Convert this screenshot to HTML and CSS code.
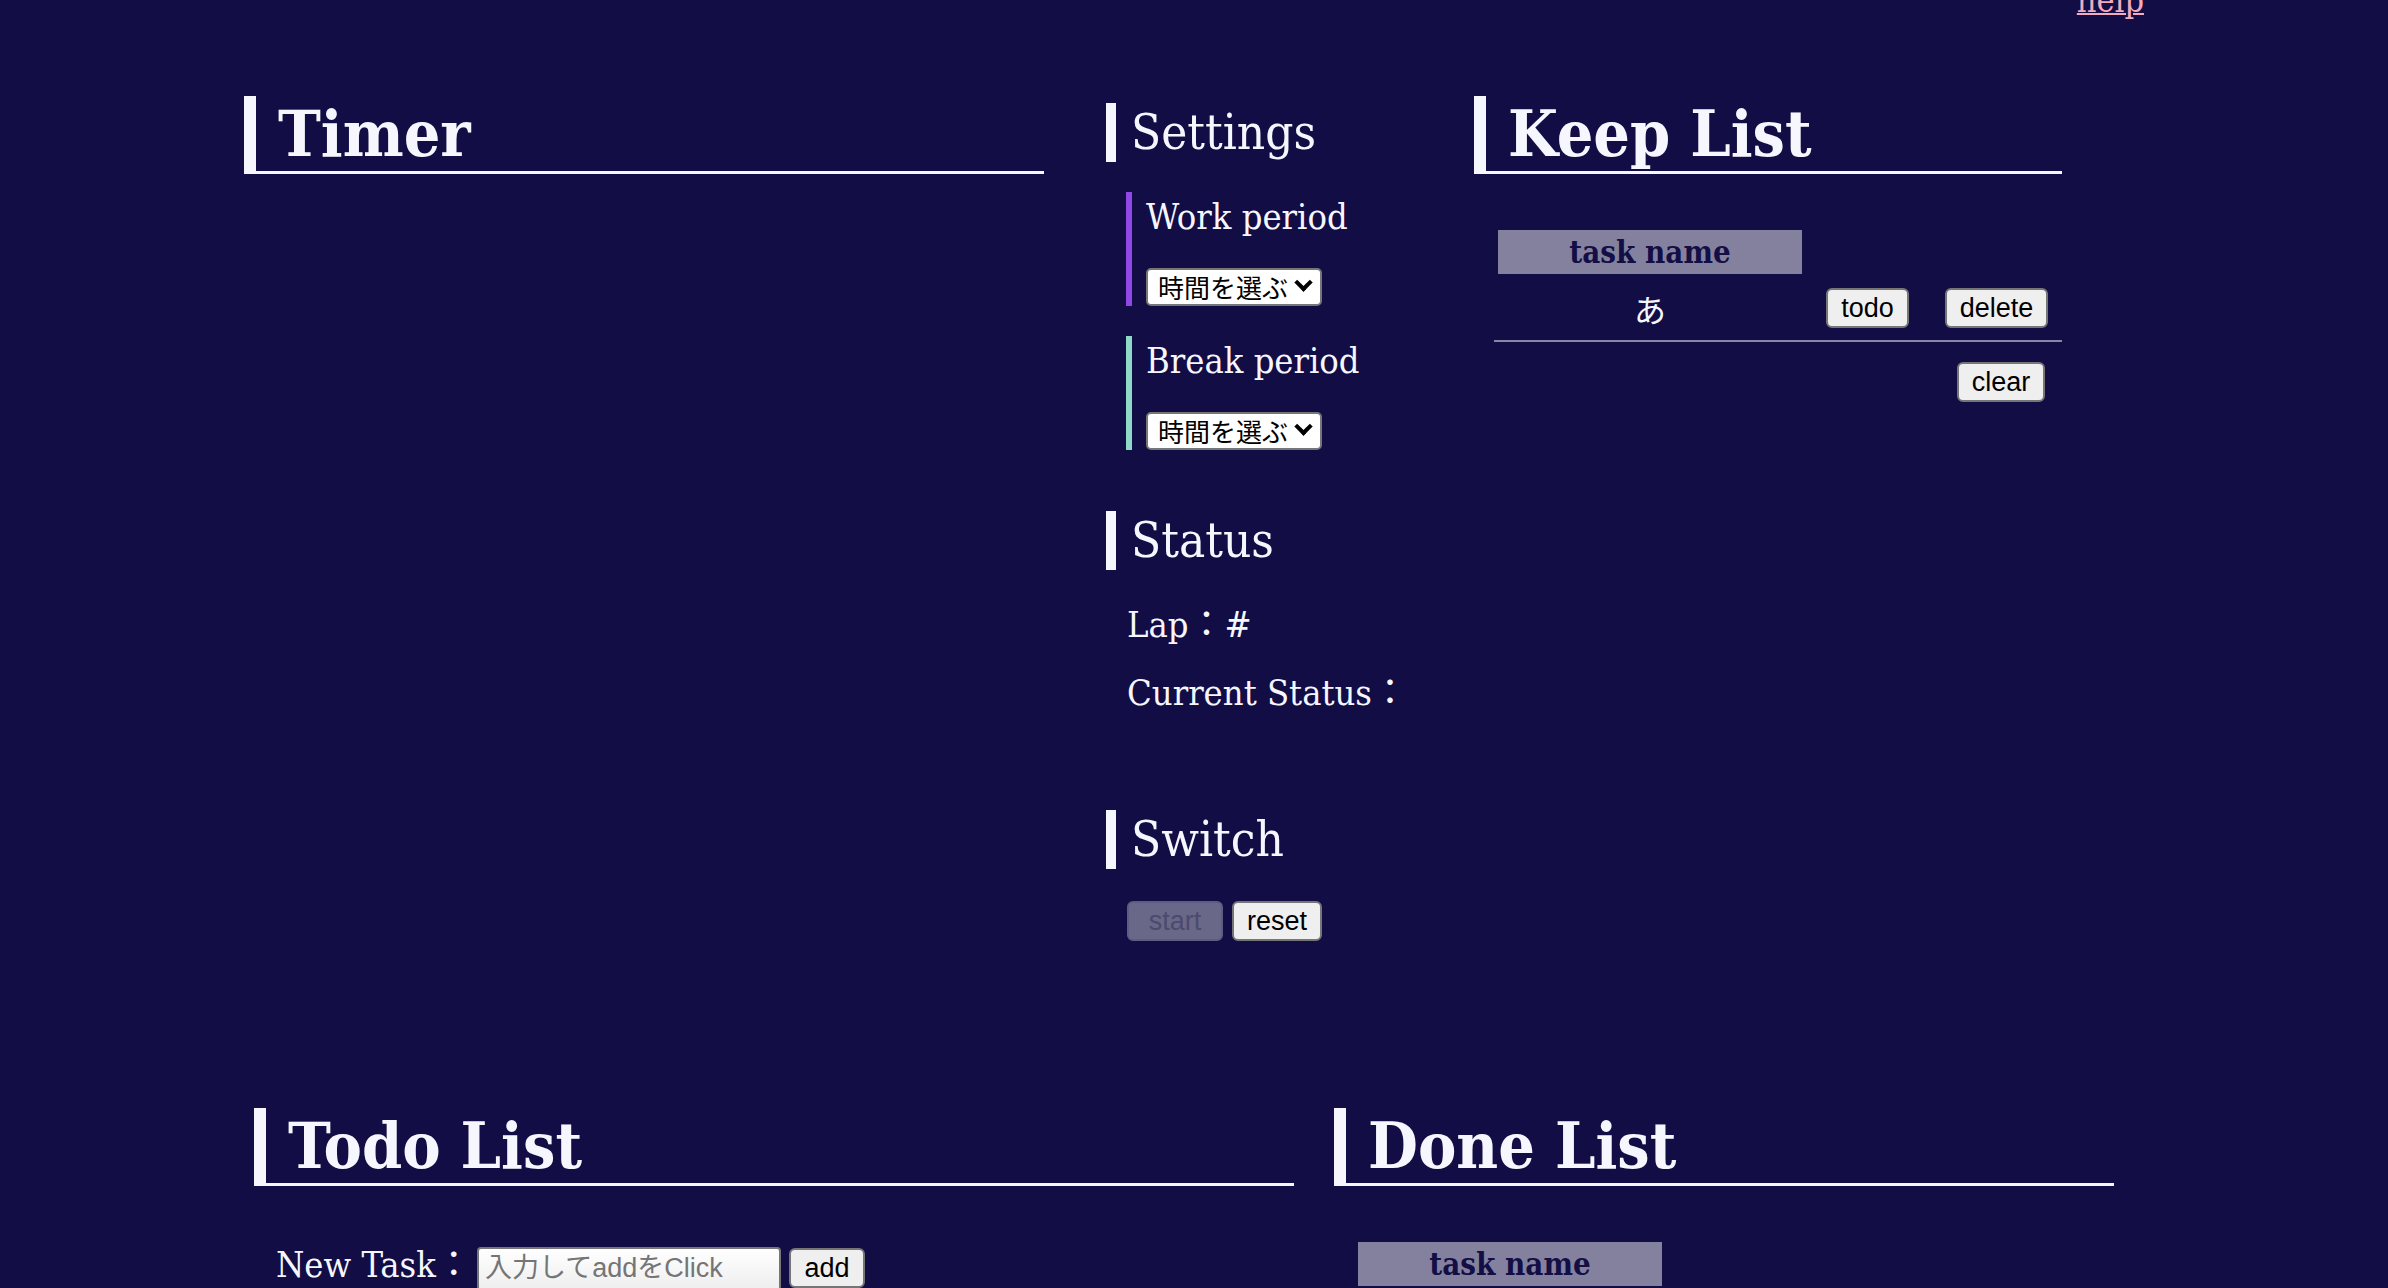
FILE: index.html
```html
<!DOCTYPE html>
<html lang="ja">
<head>
<meta charset="utf-8">
<title>Pomodoro</title>
<link rel="stylesheet" href="styles.css">
</head>
<body>
<header class="topbar"><a class="help" href="#">help</a></header>
<main>
  <div class="top">
    <section class="timer">
      <h1 class="title">Timer</h1>
    </section>
    <section class="side">
      <h2 class="subtitle">Settings</h2>
      <div class="period work">
        <h3 class="period-name">Work period</h3>
        <span class="select-wrap"><select class="picker"><option>時間を選ぶ</option></select></span>
      </div>
      <div class="period rest">
        <h3 class="period-name">Break period</h3>
        <span class="select-wrap"><select class="picker"><option>時間を選ぶ</option></select></span>
      </div>
      <h2 class="subtitle status-title">Status</h2>
      <p class="stat">Lap：#</p>
      <p class="stat stat-second">Current Status：</p>
      <h2 class="subtitle switch-title">Switch</h2>
      <div class="switch-btns">
        <button class="btn start" disabled>start</button>
        <button class="btn reset">reset</button>
      </div>
    </section>
    <section class="keep">
      <h1 class="title">Keep List</h1>
      <div class="list">
        <div class="thead"><div class="th">task name</div></div>
        <div class="trow">
          <div class="td">あ</div>
          <button class="btn todo">todo</button>
          <button class="btn delete">delete</button>
        </div>
      </div>
      <div class="clear-row"><button class="btn clear">clear</button></div>
    </section>
  </div>
  <div class="bottom">
    <section class="todo">
      <h1 class="title">Todo List</h1>
      <div class="new-task">
        <label class="task-label" for="task">New Task：</label>
        <input id="task" class="task-input" type="text" placeholder="入力してaddをClick">
        <button class="btn add">add</button>
      </div>
    </section>
    <section class="done">
      <h1 class="title">Done List</h1>
      <div class="thead done-head"><div class="th">task name</div></div>
    </section>
  </div>
</main>
</body>
</html>
```

FILE: styles.css
```css
html, body {
  margin: 0;
  padding: 0;
}
body {
  background: #120d45;
  color: #f6f7fe;
  font-family: "DejaVu Serif", "Noto Sans CJK JP", serif;
  font-stretch: condensed;
  overflow: hidden;
  height: 1288px;
}

.topbar {
  display: flex;
  justify-content: flex-end;
  align-items: flex-start;
  height: 0;
  padding-right: 244px;
}
.help {
  color: #f4aabb;
  font-size: 34px;
  line-height: 40px;
  margin-top: -20px;
  text-decoration: underline;
  text-decoration-thickness: 2px;
}

.top {
  display: flex;
  align-items: flex-start;
  margin-top: 96px;
}
.timer {
  margin-left: 244px;
  width: 800px;
}
.side {
  margin-left: 62px;
  width: 306px;
}
.keep {
  margin-left: 62px;
  width: 588px;
}

.title {
  margin: 0;
  font-size: 64px;
  font-weight: bold;
  line-height: 75px;
  border-left: 12px solid #f6f7fe;
  border-bottom: 3px solid #f6f7fe;
  padding-left: 22px;
  white-space: nowrap;
}

.subtitle {
  margin: 7px 0 0;
  font-size: 49px;
  font-weight: normal;
  line-height: 59px;
  border-left: 10px solid #f6f7fe;
  padding-left: 15px;
  white-space: nowrap;
}

.period {
  display: flex;
  flex-direction: column;
  align-items: flex-start;
  margin: 30px 0 0 20px;
  border-left: 6px solid #8f47e6;
  padding-left: 14px;
}
.period.rest {
  border-left-color: #8ed8c8;
}
.period-name {
  margin: 0;
  font-size: 36px;
  font-weight: normal;
  line-height: 50px;
  white-space: nowrap;
}
.select-wrap {
  position: relative;
  display: block;
  margin-top: 26px;
  width: 176px;
  height: 38px;
}
.picker {
  appearance: none;
  -webkit-appearance: none;
  box-sizing: border-box;
  width: 176px;
  height: 38px;
  margin: 0;
  padding: 0 0 0 10px;
  border: 2px solid #767676;
  border-radius: 5px;
  background: #fff;
  color: #000;
  font-family: "Noto Sans CJK JP", sans-serif;
  font-size: 26px;
  line-height: 34px;
}
.select-wrap::after {
  content: "";
  position: absolute;
  right: 12px;
  top: 8px;
  width: 9px;
  height: 9px;
  border-right: 4px solid #000;
  border-bottom: 4px solid #000;
  transform: rotate(45deg);
  pointer-events: none;
}

.status-title {
  margin-top: 61px;
}
.stat {
  margin: 30px 0 0 21px;
  font-size: 36px;
  line-height: 50px;
  white-space: nowrap;
}
.stat-second {
  margin-top: 18px;
}
.switch-title {
  margin-top: 92px;
}
.switch-btns {
  display: flex;
  gap: 9px;
  margin: 32px 0 0 21px;
}

.btn {
  box-sizing: border-box;
  height: 40px;
  padding: 0;
  margin: 0;
  border: 2px solid #767676;
  border-radius: 6px;
  background: #efefef;
  color: #000;
  font-family: "Liberation Sans", Arial, sans-serif;
  font-stretch: normal;
  font-size: 27px;
  line-height: 34px;
}
.btn.start {
  width: 96px;
  background: #6a6888;
  border-color: #5e5c80;
  color: #4c4a6e;
}
.btn.reset { width: 90px; }
.btn.todo { width: 83px; margin-left: 24px; }
.btn.delete { width: 103px; margin-left: 36px; }
.btn.clear { width: 88px; }
.btn.add { width: 76px; margin-left: 8px; }

.list {
  margin-left: 20px;
  border-bottom: 2px solid #8886a6;
  padding-bottom: 8px;
}
.thead {
  margin-top: 56px;
  padding-left: 4px;
}
.th {
  width: 304px;
  height: 44px;
  line-height: 44px;
  text-align: center;
  background: #83819e;
  color: #130e45;
  font-weight: bold;
  font-size: 31px;
}
.trow {
  display: flex;
  align-items: center;
  height: 48px;
  margin-top: 10px;
}
.td {
  box-sizing: border-box;
  width: 308px;
  padding-left: 4px;
  text-align: center;
  font-family: "Noto Sans CJK JP", sans-serif;
  font-size: 32px;
}
.clear-row {
  display: flex;
  justify-content: flex-end;
  padding-right: 17px;
  margin-top: 20px;
}

.bottom {
  display: flex;
  align-items: flex-start;
  margin-top: 167px;
}
.todo {
  margin-left: 254px;
  width: 1040px;
}
.done {
  margin-left: 40px;
  width: 780px;
}
.new-task {
  display: flex;
  align-items: baseline;
  margin-top: 54px;
  padding-left: 22px;
}
.task-label {
  display: inline-block;
  width: 201px;
  font-size: 36px;
  line-height: 50px;
  white-space: nowrap;
}
.task-input {
  box-sizing: border-box;
  width: 304px;
  height: 44px;
  margin: 0;
  padding: 0 6px;
  border: 2px solid #767676;
  border-radius: 4px;
  background: linear-gradient(#ffffff, #eeeeee);
  color: #000;
  font-family: "Liberation Sans", "Noto Sans CJK JP", sans-serif;
  font-stretch: normal;
  font-size: 27px;
}
.task-input::placeholder {
  color: #757575;
}
.done-head {
  padding-left: 24px;
}
```
